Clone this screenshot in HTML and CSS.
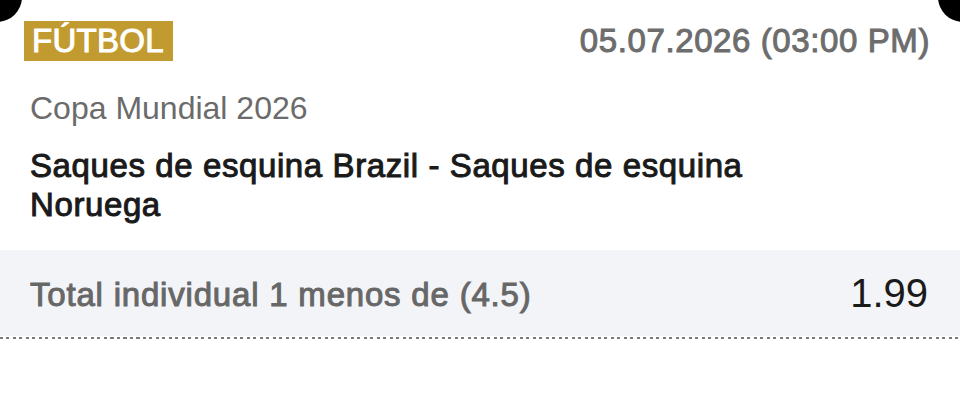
FILE: index.html
```html
<!DOCTYPE html>
<html lang="es">

<head>
    <meta charset="UTF-8">
    <meta name="viewport" content="width=device-width, initial-scale=1.0">
    <title>Cupón</title>

    <link rel="stylesheet" href="styles.css">
</head>

<body>
    <div class="ticket">
        <div class="ticket-head">
            <span class="sport">FÚTBOL</span>
            <span class="date">05.07.2026 (03:00 PM)</span>
        </div>
        <div class="league">Copa Mundial 2026</div>
        <div class="match">Saques de esquina Brazil - Saques de esquina<br>Noruega</div>
        <div class="bet">
            <span class="market">Total individual 1 menos de (4.5)</span>
            <span class="odds">1.99</span>
        </div>
        <div class="cut"></div>
    </div>
</body>

</html>
```

FILE: styles.css
```css
* {
    padding: 0;
    margin: 0;
    box-sizing: border-box;
}

body {
    background: #fff;
    font-family: "Liberation Sans", Arial, sans-serif;
}

.ticket {
    position: relative;
    width: 960px;
    padding-top: 21px;
}

/* half-circle notches at the top corners */
.ticket::before,
.ticket::after {
    content: "";
    position: absolute;
    top: -28px;
    width: 50px;
    height: 50px;
    border-radius: 50%;
    background: #000;
}

.ticket::before {
    left: -28px;
}

.ticket::after {
    right: -28px;
}

/* medium weight look */
.sport,
.date,
.match,
.market {
    -webkit-text-stroke: 1px currentColor;
}

.ticket-head {
    display: flex;
    justify-content: space-between;
    align-items: center;
    padding: 0 30px 0 24px;
}

.sport {
    background: #c29b30;
    color: #fff;
    font-size: 33px;
    letter-spacing: 0.3px;
    line-height: 40px;
    padding: 0 9px 0 8px;
}

.date {
    color: #6d6d6d;
    font-size: 33px;
    letter-spacing: 0.6px;
    line-height: 40px;
}

.league {
    color: #6b6b6b;
    font-size: 32px;
    line-height: 40px;
    padding: 0 30px;
    margin-top: 27px;
}

.match {
    color: #1a1a1a;
    font-size: 33px;
    letter-spacing: 0.6px;
    line-height: 39px;
    padding: 0 30px;
    margin-top: 18px;
}

.bet {
    display: flex;
    justify-content: space-between;
    align-items: center;
    height: 86px;
    margin-top: 26px;
    padding: 0 32px 0 30px;
    background: #f3f4f8;
}

.market {
    color: #676767;
    font-size: 33px;
    letter-spacing: 0.8px;
    line-height: 40px;
    margin-top: 4px;
}

.odds {
    color: #1a1a1a;
    font-size: 40px;
    line-height: 40px;
}

.cut {
    height: 2px;
    margin-top: 1px;
    background: repeating-linear-gradient(to right, #7a7a7a 0 3px, transparent 3px 6.5px);
}
```
